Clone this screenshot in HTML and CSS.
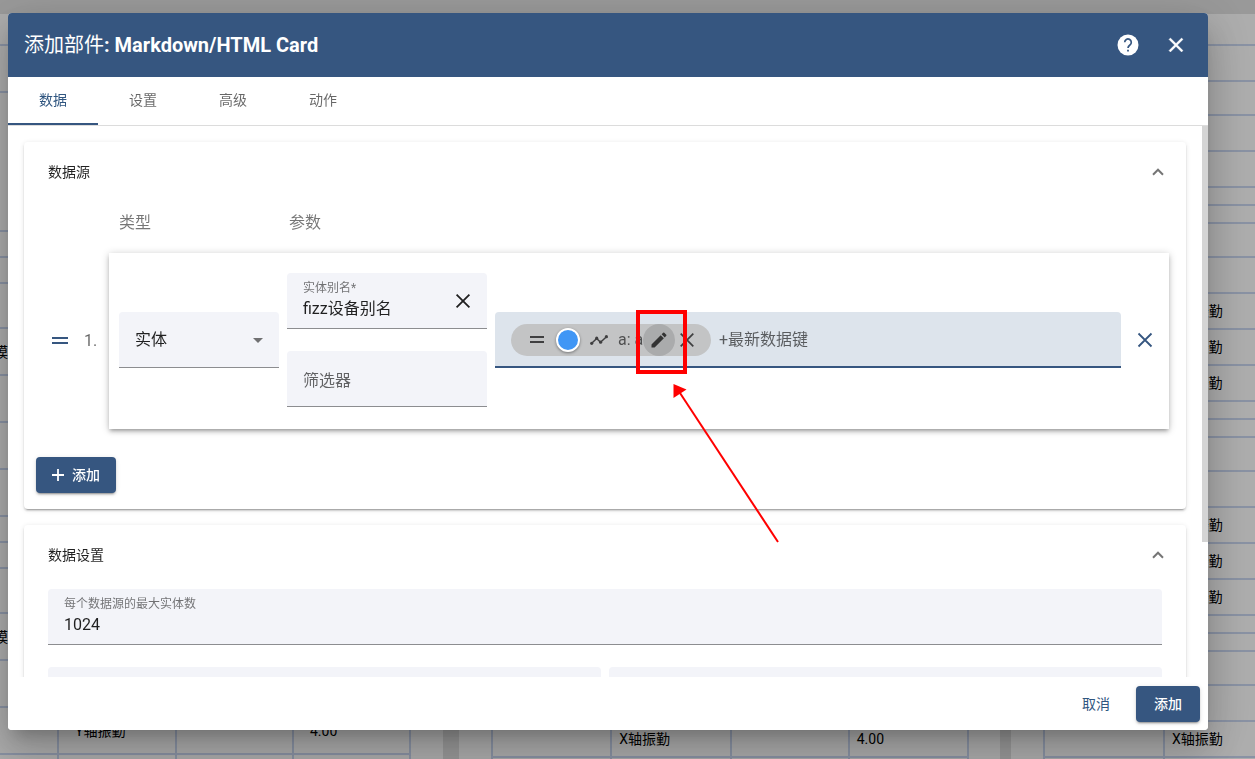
FILE: index.html
```html
<!DOCTYPE html>
<html lang="zh-CN">
<head>
<meta charset="utf-8">
<title>添加部件</title>
<link rel="stylesheet" href="styles.css">
</head>
<body>
<div class="dashboard" aria-hidden="true">
  <section class="widget widget-left">
    <table class="grid grid-left">
      <colgroup><col class="col-first"><col class="col"><col class="col-narrow"><col class="col-narrow"></colgroup>
      <tbody>
        <tr class="h32"><td></td><td></td><td></td><td></td></tr>
        <tr class="h47"><td></td><td></td><td></td><td></td></tr>
        <tr class="h139"><td></td><td></td><td></td><td></td></tr>
        <tr class="h26"><td></td><td></td><td></td><td></td></tr>
        <tr class="h26"><td></td><td></td><td></td><td></td></tr>
        <tr class="h45"><td></td><td></td><td></td><td></td></tr>
        <tr class="h47"><td>模块</td><td></td><td></td><td></td></tr>
        <tr class="h47"><td></td><td></td><td></td><td></td></tr>
        <tr class="h47"><td></td><td></td><td></td><td></td></tr>
        <tr class="h47"><td></td><td></td><td></td><td></td></tr>
        <tr class="h26"><td></td><td></td><td></td><td></td></tr>
        <tr class="h26"><td></td><td></td><td></td><td></td></tr>
        <tr class="h45"><td></td><td></td><td></td><td></td></tr>
        <tr class="h47"><td>模块</td><td></td><td></td><td></td></tr>
        <tr class="h47"><td></td><td></td><td></td><td></td></tr>
        <tr class="h47 roomy"><td></td><td>Y轴振勤</td><td></td><td>4.00</td></tr>
        <tr class="h47"><td></td><td></td><td></td><td></td></tr>
      </tbody>
    </table>
  </section>
  <section class="widget widget-middle">
    <table class="grid grid-inset">
      <colgroup><col class="col-wide"><col class="col-wide"><col class="col"><col class="col-wide"></colgroup>
      <tbody>
        <tr class="h708"><td></td><td></td><td></td><td></td></tr>
        <tr class="h36"><td></td><td>X轴振勤</td><td></td><td>4.00</td></tr>
        <tr class="h36"><td></td><td></td><td></td><td></td></tr>
      </tbody>
    </table>
  </section>
  <section class="widget">
    <table class="grid grid-inset">
      <colgroup><col class="col-wide"><col class="col-wide"></colgroup>
      <tbody>
        <tr class="h32"><td></td><td></td></tr>
        <tr class="h36"><td></td><td></td></tr>
        <tr class="h34"><td></td><td></td></tr>
        <tr class="h36"><td></td><td></td></tr>
        <tr class="h36"><td></td><td></td></tr>
        <tr class="h18"><td></td><td></td></tr>
        <tr class="h18"><td></td><td></td></tr>
        <tr class="h34"><td></td><td></td></tr>
        <tr class="h36"><td></td><td></td></tr>
        <tr class="h36"><td></td><td>X轴振勤</td></tr>
        <tr class="h36"><td></td><td>Y轴振勤</td></tr>
        <tr class="h36"><td></td><td>Z轴振勤</td></tr>
        <tr class="h18"><td></td><td></td></tr>
        <tr class="h18"><td></td><td></td></tr>
        <tr class="h34"><td></td><td></td></tr>
        <tr class="h36"><td></td><td></td></tr>
        <tr class="h36"><td></td><td>X轴振勤</td></tr>
        <tr class="h36"><td></td><td>Y轴振勤</td></tr>
        <tr class="h36"><td></td><td>Z轴振勤</td></tr>
        <tr class="h18"><td></td><td></td></tr>
        <tr class="h18"><td></td><td></td></tr>
        <tr class="h34"><td></td><td></td></tr>
        <tr class="h36"><td></td><td></td></tr>
        <tr class="h36"><td></td><td>X轴振勤</td></tr>
        <tr class="h36"><td></td><td></td></tr>
      </tbody>
    </table>
  </section>
</div>

<div class="backdrop">
  <div class="dialog" role="dialog" aria-labelledby="dialog-title">
    <header class="toolbar">
      <h1 class="title" id="dialog-title">添加部件<span class="title-strong">: Markdown/HTML Card</span></h1>
      <button class="icon-button" type="button" aria-label="帮助">
        <svg class="icon" viewBox="0 0 24 24"><circle cx="12" cy="12" r="10.5" fill="#fff"/><path d="M8.7 9.3a3.3 3.3 0 1 1 5.2 2.7c-1.2.9-1.9 1.5-1.9 3" fill="none" stroke="#365680" stroke-width="1.7"/><path d="M11.1 16.8h1.8v1.8h-1.8z" fill="#365680"/></svg>
      </button>
      <button class="icon-button" type="button" aria-label="关闭">
        <svg class="icon" viewBox="0 0 24 24"><path fill="currentColor" stroke="currentColor" stroke-width=".4" d="M19 6.41 17.59 5 12 10.59 6.41 5 5 6.41 10.59 12 5 17.59 6.41 19 12 13.41 17.59 19 19 17.59 13.41 12z"/></svg>
      </button>
    </header>

    <nav class="tabs" role="tablist">
      <button class="tab tab-active" type="button" role="tab" aria-selected="true">数据</button>
      <button class="tab" type="button" role="tab">设置</button>
      <button class="tab" type="button" role="tab">高级</button>
      <button class="tab" type="button" role="tab">动作</button>
    </nav>

    <div class="scroll-area">
      <main class="content">
        <section class="card">
          <button class="card-header" type="button">
            <span>数据源</span>
            <svg class="chevron" viewBox="0 0 12 8"><path d="M1 6.7l5-5 5 5" fill="none" stroke="currentColor" stroke-width="2"/></svg>
          </button>
          <div class="sources">
            <div class="source-heads"><span class="head-type">类型</span><span>参数</span></div>
            <div class="source">
              <div class="source-index">
                <svg class="drag" viewBox="0 0 24 24"><path fill="currentColor" d="M4 8h16v2H4zM4 13h16v2H4z"/></svg>
                <span>1.</span>
              </div>
              <div class="source-panel">
                <div class="field field-type">
                  <select class="control" aria-label="类型"><option>实体</option></select>
                  <svg class="caret" viewBox="0 0 10 5"><path fill="currentColor" d="M0 0h10L5 5z"/></svg>
                </div>
                <div class="params">
                  <div class="field field-with-label">
                    <div class="field-text">
                      <label class="float-label" for="alias">实体别名*</label>
                      <input class="control" id="alias" type="text" value="fizz设备别名">
                    </div>
                    <button class="clear" type="button" aria-label="清除">
                      <svg class="icon" viewBox="0 0 24 24"><path d="M5.6 5.6l12.8 12.8M18.4 5.6L5.6 18.4" fill="none" stroke="currentColor" stroke-width="1.8"/></svg>
                    </button>
                  </div>
                  <div class="field field-empty">
                    <input class="control" type="text" placeholder="筛选器" aria-label="筛选器">
                  </div>
                </div>
                <div class="field field-keys">
                  <div class="chip">
                    <svg class="chip-drag" viewBox="0 0 14 8"><path fill="currentColor" d="M0 0h14v2H0zM0 5h14v2H0z"/></svg>
                    <span class="swatch"></span>
                    <svg class="trend" viewBox="0 0 18 10"><path d="M1.7 8.3l5-4.8 3.8 3.8 6-5.6" fill="none" stroke="currentColor" stroke-width="1.5"/><g fill="currentColor"><circle cx="1.7" cy="8.3" r="1.6"/><circle cx="6.7" cy="3.2" r="1.6"/><circle cx="10.6" cy="7.2" r="1.6"/><circle cx="16.4" cy="1.7" r="1.6"/></g></svg>
                    <span class="chip-text">a: a</span>
                    <span class="edit-wrap">
                      <button class="chip-edit" type="button" aria-label="编辑">
                        <svg class="pencil" viewBox="0 0 24 24"><path fill="currentColor" d="M3 17.25V21h3.75L17.81 9.94l-3.75-3.75zM20.71 7.04a1 1 0 0 0 0-1.41l-2.34-2.34a1 1 0 0 0-1.41 0l-1.83 1.83 3.75 3.75z"/></svg>
                      </button>
                      <svg class="callout" viewBox="0 0 150 240"><path d="M3 3h47v60H3z" fill="none" stroke="#f00" stroke-width="4"/><path d="M45 84l98 149" stroke="#f00" stroke-width="2"/><path d="M38.5 75v14l13-8.5z" fill="#f00"/></svg>
                    </span>
                    <button class="chip-remove" type="button" aria-label="移除">
                      <svg class="remove-icon" viewBox="0 0 14 14"><path d="M.7.7l12.6 12.6M13.3.7L.7 13.3" fill="none" stroke="currentColor" stroke-width="1.7"/></svg>
                    </button>
                  </div>
                  <input class="control" type="text" placeholder="+最新数据键" aria-label="最新数据键">
                </div>
                <button class="row-remove" type="button" aria-label="移除数据源">
                  <svg class="icon" viewBox="0 0 24 24"><path d="M5.5 5.5l13 13M18.5 5.5l-13 13" fill="none" stroke="currentColor" stroke-width="1.8"/></svg>
                </button>
              </div>
            </div>
            <button class="primary primary-icon" type="button">
              <svg class="plus" viewBox="0 0 12 12"><path d="M6 0v12M0 6h12" stroke="currentColor" stroke-width="1.8"/></svg>添加
            </button>
          </div>
        </section>

        <section class="card">
          <button class="card-header" type="button">
            <span>数据设置</span>
            <svg class="chevron" viewBox="0 0 12 8"><path d="M1 6.7l5-5 5 5" fill="none" stroke="currentColor" stroke-width="2"/></svg>
          </button>
          <div class="settings">
            <div class="field field-with-label">
              <div class="field-text">
                <label class="float-label" for="limit">每个数据源的最大实体数</label>
                <input class="control" id="limit" type="text" value="1024">
              </div>
            </div>
            <div class="settings-row">
              <div class="field"></div>
              <div class="field"></div>
            </div>
          </div>
        </section>
      </main>
      <div class="scroll-track"><div class="scroll-thumb"></div></div>
    </div>

    <footer class="actions">
      <button class="plain" type="button">取消</button>
      <button class="primary" type="button">添加</button>
    </footer>
  </div>
</div>
</body>
</html>
```
FILE: styles.css
```css
* { box-sizing: border-box; }

html, body { height: 100%; }

body {
  margin: 0;
  overflow: hidden;
  font-family: Roboto, "Noto Sans CJK SC", sans-serif;
  font-size: 16px;
  line-height: 24px;
  color: rgba(0, 0, 0, 0.87);
}

button, input, select {
  font: inherit;
  color: inherit;
  border: 0;
  background: none;
  padding: 0;
  margin: 0;
  outline: 0;
}

svg { display: block; flex: none; }

/* Dashboard behind the dialog */
.dashboard {
  display: flex;
  height: 100vh;
  padding-top: 14px;
  background: #e2e2e2;
  overflow: hidden;
}
.widget { flex: 1 0 auto; background: #fff; overflow: hidden; }
.widget-left { flex: none; width: 443px; margin-right: 16px; }
.widget-middle { flex: none; width: 541px; margin-right: 11px; }
.grid { table-layout: fixed; border-collapse: separate; border-spacing: 0; font-size: 14px; line-height: 14px; color: #000; }
.grid td { padding: 0 7px; border: solid #cbd8f2; border-width: 0 2px 2px 0; white-space: nowrap; }
.grid-left { width: 424px; margin-left: -13px; }
.grid-inset { width: 478px; margin-left: 32px; border-left: 2px solid #cbd8f2; }
.widget:last-child .grid-inset { width: 242px; }
.col-first { width: 72px; }
.col { width: 118px; }
.col-narrow { width: 117px; }
.col-wide { width: 119px; }
.grid .roomy td { padding: 0 16px; }
.h18 { height: 18px; }
.h26 { height: 26px; }
.h32 { height: 32px; }
.h34 { height: 34px; }
.h36 { height: 36px; }
.h45 { height: 45px; }
.h47 { height: 47px; }
.h139 { height: 139px; }
.h708 { height: 708px; }

/* Dialog */
.backdrop {
  position: fixed;
  inset: 0;
  display: flex;
  padding: 13px 47px 29px 8px;
  background: rgba(0, 0, 0, 0.32);
}
.dialog {
  flex: 1;
  min-width: 0;
  display: flex;
  flex-direction: column;
  border-radius: 4px;
  background: #fff;
  overflow: hidden;
  box-shadow: 0 11px 15px -7px rgba(0, 0, 0, 0.2), 0 24px 38px 3px rgba(0, 0, 0, 0.14), 0 9px 46px 8px rgba(0, 0, 0, 0.12);
}
.toolbar {
  flex: none;
  display: flex;
  align-items: center;
  height: 64px;
  padding: 0 8px 0 16px;
  background: #365680;
  color: #fff;
}
.title { flex: 1; margin: 0; font-size: 20px; font-weight: 400; line-height: 32px; }
.title-strong { font-weight: 700; }
.icon-button { display: grid; place-items: center; width: 48px; height: 48px; }
.icon { width: 24px; height: 24px; }

.tabs { flex: none; display: flex; border-bottom: 1px solid #dcdcdc; }
.tab {
  width: 90px;
  height: 48px;
  border-bottom: 2px solid transparent;
  font-size: 14px;
  color: rgba(0, 0, 0, 0.6);
}
.tab-active { color: #305680; border-color: #365680; }

.scroll-area { flex: 1; min-height: 0; display: flex; overflow: hidden; }
.content { flex: 1; min-width: 0; display: flex; flex-direction: column; gap: 16px; padding: 16px; }
.scroll-track { width: 6px; }
.scroll-thumb { height: 75.5%; background: #d4d4d4; }

.card {
  flex: none;
  border-radius: 4px;
  background: #fff;
  box-shadow: 0 3px 1px -2px rgba(0, 0, 0, 0.2), 0 2px 2px 0 rgba(0, 0, 0, 0.14), 0 1px 5px 0 rgba(0, 0, 0, 0.12);
}
.card-header {
  display: flex;
  align-items: center;
  justify-content: space-between;
  width: 100%;
  height: 60px;
  padding: 0 22px 0 24px;
  font-size: 14px;
}
.chevron { width: 12px; height: 8px; color: rgba(0, 0, 0, 0.54); }

/* Data sources */
.sources { padding: 0 17px 16px 12px; }
.source-heads { display: flex; height: 51px; padding-left: 83px; line-height: 42px; color: rgba(0, 0, 0, 0.54); }
.head-type { width: 170px; }
.source { display: flex; margin-bottom: 28px; }
.source-index { display: flex; align-items: center; gap: 12px; width: 73px; padding-left: 12px; color: rgba(0, 0, 0, 0.6); }
.drag { width: 24px; height: 24px; color: #365680; }
.source-panel {
  flex: 1;
  min-width: 0;
  display: flex;
  align-items: center;
  gap: 8px;
  padding: 20px 0 22px 10px;
  box-shadow: 0 3px 3px -2px rgba(0, 0, 0, 0.2), 0 3px 4px 0 rgba(0, 0, 0, 0.14), 0 1px 8px 0 rgba(0, 0, 0, 0.2);
}
.params { flex: none; width: 200px; display: flex; flex-direction: column; gap: 22px; }

.field {
  display: flex;
  align-items: center;
  height: 56px;
  padding: 0 16px;
  border-bottom: 1px solid #8c8d90;
  border-radius: 4px 4px 0 0;
  background: #f3f4f9;
}
.control { flex: 1; width: 100%; min-width: 0; height: 24px; appearance: none; text-overflow: ellipsis; }
.control::placeholder { color: rgba(0, 0, 0, 0.6); opacity: 1; }
.field-type { flex: none; width: 160px; padding-top: 1px; }
.field-empty { padding-top: 4px; }
.caret { width: 10px; height: 5px; color: rgba(0, 0, 0, 0.54); }
.field-text { flex: 1; min-width: 0; display: flex; flex-direction: column; padding-bottom: 2px; }
.float-label { font-size: 12px; line-height: 18px; color: rgba(0, 0, 0, 0.54); }
.field-with-label .control { flex: none; }
.field-with-label { padding-right: 12px; }
.clear { width: 24px; height: 24px; }

.field-keys { flex: 1; min-width: 0; gap: 8px; padding-top: 2px; border-bottom: 2px solid #365680; background: #dde4ec; }
.chip {
  flex: none;
  display: flex;
  align-items: center;
  width: 200px;
  height: 32px;
  padding: 0 17px 0 19px;
  border-radius: 16px;
  background: #c3c4c5;
  color: #3f3f40;
}
.chip-drag { width: 14px; height: 8px; margin-right: 12px; }
.swatch { flex: none; width: 24px; height: 24px; border: 2px solid #fff; border-radius: 50%; background: #4096f5; box-shadow: 0 1px 3px rgba(0, 0, 0, 0.4); }
.trend { width: 18px; height: 10px; margin: 0 10px; }
.chip-text { flex: 1; font-size: 16px; white-space: nowrap; color: rgba(0, 0, 0, 0.6); }
.edit-wrap { position: relative; z-index: 2; }
.chip-edit { display: grid; place-items: center; width: 32px; height: 32px; border-radius: 50%; background: #aaabac; color: #333; }
.pencil { width: 20px; height: 20px; }
.callout { position: absolute; left: -8px; top: -15px; width: 150px; height: 240px; pointer-events: none; }
.chip-remove { margin-left: 5px; }
.remove-icon { width: 14px; height: 14px; }
.row-remove { display: grid; place-items: center; width: 32px; height: 32px; margin-right: 8px; color: #365680; }

.primary {
  display: inline-flex;
  align-items: center;
  justify-content: center;
  min-width: 64px;
  height: 36px;
  padding: 0 16px;
  border-radius: 4px;
  background: #365680;
  color: #fff;
  font-size: 14px;
  font-weight: 500;
  box-shadow: 0 3px 1px -2px rgba(0, 0, 0, 0.2), 0 2px 2px 0 rgba(0, 0, 0, 0.14), 0 1px 5px 0 rgba(0, 0, 0, 0.12);
}
.primary-icon { display: flex; gap: 8px; width: 80px; }
.plus { width: 12px; height: 12px; }

/* Data settings */
.settings { display: flex; flex-direction: column; gap: 22px; padding: 4px 24px 24px; }
.settings-row { display: grid; grid-template-columns: 1fr 1fr; gap: 8px; }

.actions { flex: none; display: flex; justify-content: flex-end; gap: 8px; padding: 9px 8px 8px; background: #fff; }
.plain { min-width: 64px; height: 36px; color: #305680; font-size: 14px; }
```
